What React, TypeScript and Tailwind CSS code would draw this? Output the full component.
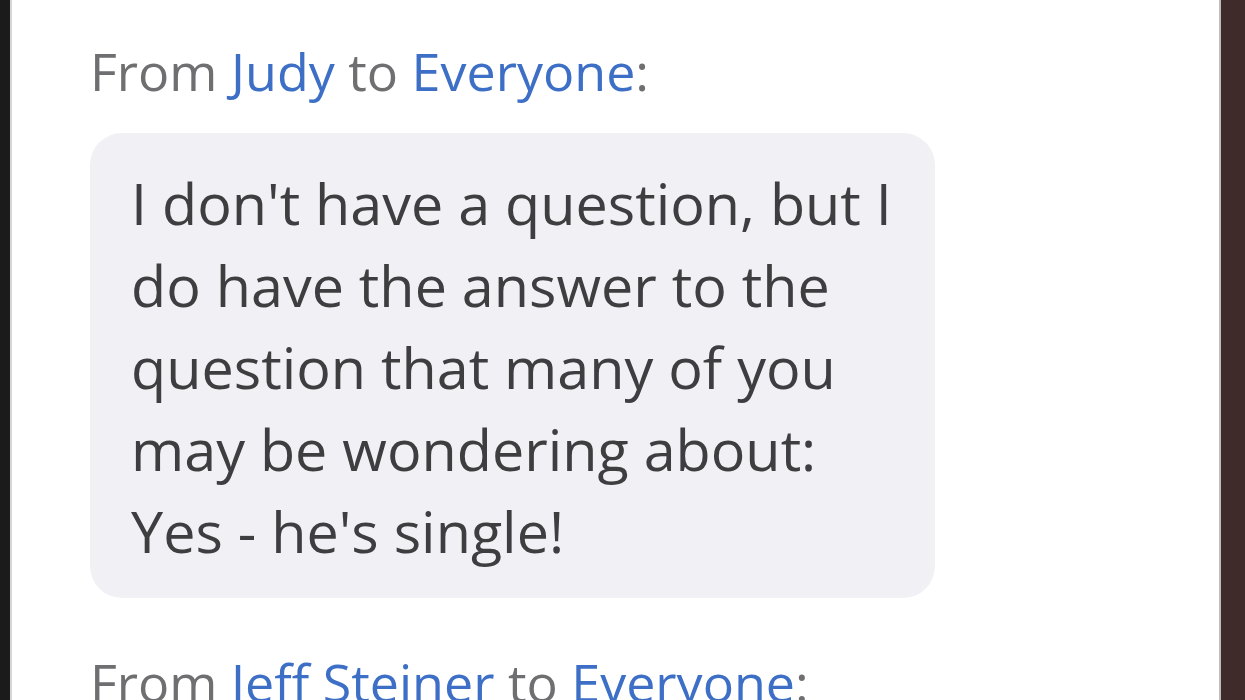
export default function App() {
  return (
    <div className="flex h-[700px] w-[1245px] overflow-hidden bg-white font-['Open_Sans',sans-serif]">
      {/* left window edge */}
      <div className="w-[10px] shrink-0 bg-[#1b1b1b]" />
      <div className="w-[2px] shrink-0 bg-[#d6d6d6]" />

      {/* chat panel */}
      <div className="flex-1 overflow-hidden pl-[78px] pt-[43px]">
        <p className="text-[52px] leading-[56px] whitespace-nowrap text-[#6f6f72]">
          From <span className="text-[#3d6fc6]">Judy</span> to{" "}
          <span className="text-[#3d6fc6]">Everyone</span>:
        </p>

        <div className="mt-[34px] w-[845px] rounded-[32px] bg-[#f1f1f5] px-[41px] pt-[29px] pb-[26px]">
          <p className="text-[57.5px] leading-[82px] whitespace-nowrap text-[#3e3e40]">
            I don't have a question, but I<br />
            do have the answer to the
            <br />
            question that many of you
            <br />
            may be wondering about:
            <br />
            Yes - he's single!
          </p>
        </div>

        <p className="mt-[56px] text-[52px] leading-[56px] whitespace-nowrap text-[#6f6f72]">
          From <span className="text-[#3d6fc6]">Jeff Steiner</span> to{" "}
          <span className="text-[#3d6fc6]">Everyone</span>:
        </p>
      </div>

      {/* right window edge */}
      <div className="w-[2px] shrink-0 bg-[#bdbdbd]" />
      <div className="w-[24px] shrink-0 bg-[#3e2b2a]" />
    </div>
  );
}
